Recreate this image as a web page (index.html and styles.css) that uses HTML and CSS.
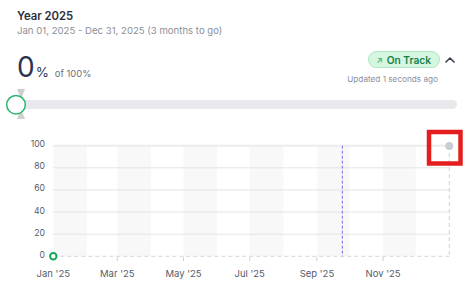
FILE: index.html
```html
<!DOCTYPE html>
<html lang="en">
<head>
  <meta charset="UTF-8">
  <title>Year 2025 Goal</title>
  <meta name="viewport" content="width=device-width, initial-scale=1.0">
  <link rel="stylesheet" href="styles.css">
</head>
<body>
<div class="card">
  <div class="head">
    <div class="title">Year 2025</div>
    <div class="dates">Jan 01, 2025 - Dec 31, 2025 (3 months to go)</div>
  </div>

  <div class="stat-row">
    <div class="value"><span class="num">0</span><span class="pct">%</span><span class="of">of 100%</span></div>
    <div class="status">
      <div class="status-col">
        <span class="badge"><span class="arrow">&#8599;</span>On Track</span>
        <span class="updated">Updated 1 seconds ago</span>
      </div>
      <svg class="chevron" width="10" height="6" viewBox="0 0 10 6">
        <polyline points="1,5 5,1 9,5" fill="none" stroke="#3b4150" stroke-width="1.6" stroke-linecap="round" stroke-linejoin="round"/>
      </svg>
    </div>
  </div>

  <div class="slider">
    <div class="track"></div>
    <svg class="thumb" width="24" height="32" viewBox="0 0 24 32">
      <polygon points="13,1 21,1 17,11" fill="#cfcfcf"/>
      <polygon points="17,21 13,31 21,31" fill="#cfcfcf"/>
      <circle cx="12" cy="16.7" r="9.3" fill="#fff" stroke="#2bb673" stroke-width="1.5"/>
    </svg>
  </div>

  <svg class="chart" width="468" height="165" viewBox="0 116 468 165">
    <g fill="#f8f8f8">
      <rect x="53.3" y="142.7" width="33.6" height="110.6"/>
      <rect x="117.3" y="142.7" width="33.6" height="110.6"/>
      <rect x="183.5" y="142.7" width="33.6" height="110.6"/>
      <rect x="249.7" y="142.7" width="33.6" height="110.6"/>
      <rect x="316.9" y="142.7" width="32.6" height="110.6"/>
      <rect x="383.1" y="142.7" width="32.6" height="110.6"/>
    </g>
    <g stroke="#e4e4e4" stroke-width="1">
      <line x1="53.3" x2="449.3" y1="142.7" y2="142.7" stroke="#ececec" stroke-width="2"/>
      <line x1="53.3" x2="449.3" y1="164.8" y2="164.8"/>
      <line x1="53.3" x2="449.3" y1="186.9" y2="186.9"/>
      <line x1="53.3" x2="449.3" y1="209.1" y2="209.1"/>
      <line x1="53.3" x2="449.3" y1="231.2" y2="231.2"/>
    </g>
    <line x1="53.3" x2="449.3" y1="253.3" y2="253.3" stroke="#d6d6d6" stroke-dasharray="4 3"/>
    <line x1="449.3" x2="449.3" y1="143" y2="253.3" stroke="#cfcfcf" stroke-dasharray="4 3"/>
    <line x1="342.3" x2="342.3" y1="142.7" y2="253.3" stroke="#7a66ee" stroke-dasharray="3 2"/>
    <g stroke="#cfcfcf">
      <line x1="117.3" x2="117.3" y1="254" y2="258"/>
      <line x1="183.5" x2="183.5" y1="254" y2="258"/>
      <line x1="249.7" x2="249.7" y1="254" y2="258"/>
      <line x1="316.9" x2="316.9" y1="254" y2="258"/>
      <line x1="383.1" x2="383.1" y1="254" y2="258"/>
    </g>
    <g class="ylab" text-anchor="end">
      <text x="45" y="144.2">100</text>
      <text x="45" y="166.3">80</text>
      <text x="45" y="188.4">60</text>
      <text x="45" y="210.6">40</text>
      <text x="45" y="232.7">20</text>
      <text x="45" y="254.8">0</text>
    </g>
    <g class="xlab" text-anchor="middle">
      <text x="53.3" y="274">Jan '25</text>
      <text x="117.3" y="274">Mar '25</text>
      <text x="183.5" y="274">May '25</text>
      <text x="249.7" y="274">Jul '25</text>
      <text x="316.9" y="274">Sep '25</text>
      <text x="383.1" y="274">Nov '25</text>
    </g>
    <circle cx="449.3" cy="143" r="4" fill="#c9ccd4"/>
    <rect x="429" y="129" width="31.5" height="31.5" fill="none" stroke="#e41e1e" stroke-width="4.5"/>
    <circle cx="53.3" cy="253.3" r="3.2" fill="#fff" stroke="#19a45b" stroke-width="2"/>
  </svg>
</div>
</body>
</html>
```

FILE: styles.css
```css
body {
  margin: 0;
  background: #fff;
  font-family: Inter, 'Noto Sans', sans-serif;
  color: #2d3340;
}
.card { width: 468px; height: 281px; overflow: hidden; }

.head { padding: 9px 17px 0; }
.title { font-size: 11.3px; line-height: 15px; font-weight: 600; color: #2b2f3a; }
.dates { font-size: 9.6px; line-height: 14px; color: #8a8f99; }

.stat-row {
  display: flex;
  justify-content: space-between;
  align-items: flex-start;
  margin-top: 13px;
  padding: 0 13px 0 17px;
}
.value { margin-top: 2px; line-height: 28px; }
.num { font-size: 28px; color: #2c3350; }
.pct { font-size: 13.4px; color: #2c3350; margin-left: 1px; }
.of { font-size: 9.4px; color: #6b7280; margin-left: 6px; }

.status { display: flex; align-items: flex-start; gap: 7px; }
.status-col { display: flex; flex-direction: column; align-items: flex-end; }
.badge {
  display: flex;
  align-items: center;
  height: 15px;
  margin-right: -2px;
  padding: 0 8px 0 7px;
  border: 1px solid #a9e8c0;
  border-radius: 9px;
  background: #d7f6e2;
  color: #17824a;
  font-size: 10.2px;
  font-weight: 600;
}
.arrow { font-size: 8px; color: #3cb872; margin-right: 4px; }
.updated { margin-top: 5px; font-size: 8.2px; line-height: 12px; color: #8a90a0; }
.chevron { margin-top: 6px; }

.slider {
  position: relative;
  height: 30px;
  margin: 1px 11px 0 17px;
  padding-top: 11px;
  box-sizing: border-box;
}
.track { height: 9px; border-radius: 5px; background: #e8e9ec; }
.thumb { position: absolute; left: -13px; top: -1px; }

.chart { display: block; }
.ylab text, .xlab text { font-family: Inter, sans-serif; fill: #555b6a; }
.ylab text { font-size: 8.6px; }
.xlab text { font-size: 9.5px; }
```
